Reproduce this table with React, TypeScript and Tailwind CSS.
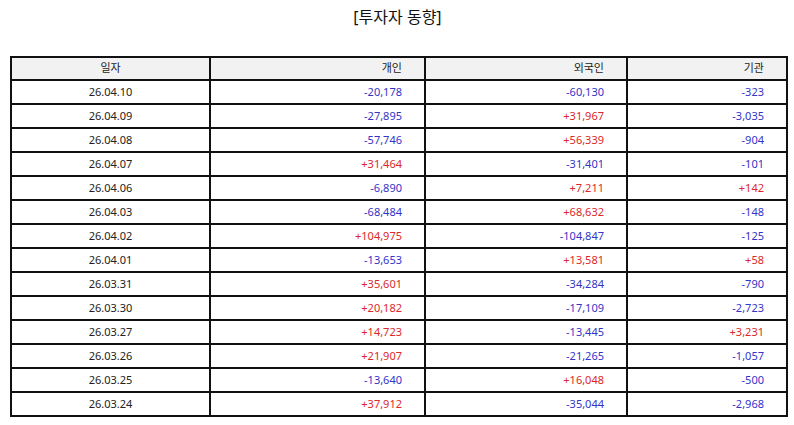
const rows: [string, string, string, string][] = [
  ["26.04.10", "-20,178", "-60,130", "-323"],
  ["26.04.09", "-27,895", "+31,967", "-3,035"],
  ["26.04.08", "-57,746", "+56,339", "-904"],
  ["26.04.07", "+31,464", "-31,401", "-101"],
  ["26.04.06", "-6,890", "+7,211", "+142"],
  ["26.04.03", "-68,484", "+68,632", "-148"],
  ["26.04.02", "+104,975", "-104,847", "-125"],
  ["26.04.01", "-13,653", "+13,581", "+58"],
  ["26.03.31", "+35,601", "-34,284", "-790"],
  ["26.03.30", "+20,182", "-17,109", "-2,723"],
  ["26.03.27", "+14,723", "-13,445", "+3,231"],
  ["26.03.26", "+21,907", "-21,265", "-1,057"],
  ["26.03.25", "-13,640", "+16,048", "-500"],
  ["26.03.24", "+37,912", "-35,044", "-2,968"],
]

function Num({ value }: { value: string }) {
  const color = value.startsWith("+") ? "text-[#dc2828]" : "text-[#3434c8]"
  return (
    <td className={`border-2 border-[#111] pr-[22px] text-right ${color}`}>{value}</td>
  )
}

export default function App() {
  return (
    <div
      className="w-[794px] h-[425px] bg-white pl-[10px] pr-[9px]"
      style={{ fontFamily: '"Noto Sans", "Noto Sans CJK KR", sans-serif' }}
    >
      <h1 className="pt-[5px] h-[56px] text-center text-[16px] leading-[24px] text-[#111]">
        [투자자 동향]
      </h1>
      <table className="w-[776px] table-fixed border-collapse text-[11px] text-[#222]">
        <colgroup>
          <col className="w-[199px]" />
          <col className="w-[215px]" />
          <col className="w-[202px]" />
          <col className="w-[160px]" />
        </colgroup>
        <thead>
          <tr className="h-[23px] bg-[#f2f2f2]">
            <th className="border-2 border-[#111] text-center font-normal">일자</th>
            <th className="border-2 border-[#111] pr-[22px] text-right font-normal">개인</th>
            <th className="border-2 border-[#111] pr-[22px] text-right font-normal">외국인</th>
            <th className="border-2 border-[#111] pr-[22px] text-right font-normal">기관</th>
          </tr>
        </thead>
        <tbody>
          {rows.map((r) => (
            <tr key={r[0]} className="h-[24px]">
              <td className="border-2 border-[#111] text-center">{r[0]}</td>
              <Num value={r[1]} />
              <Num value={r[2]} />
              <Num value={r[3]} />
            </tr>
          ))}
        </tbody>
      </table>
    </div>
  )
}
